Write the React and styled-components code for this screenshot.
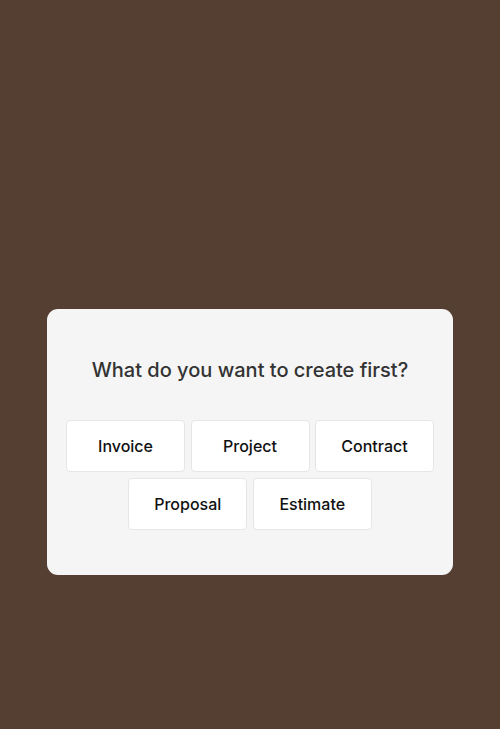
import React from "react";
import styled, { createGlobalStyle } from "styled-components";

const Global = createGlobalStyle`
  html, body { margin: 0; padding: 0; background: #553f33; }
  body { font-family: Inter, "Liberation Sans", sans-serif; }
  * { box-sizing: border-box; }
`;

const Page = styled.div`
  width: 500px;
  min-height: 729px;
  background: #553f33;
  padding-top: 309px;
  display: flex;
  justify-content: center;
  align-items: flex-start;
`;

const Card = styled.div`
  width: 406px;
  background: #f5f5f5;
  border-radius: 11px;
  padding: 47px 18px 45px;
  display: flex;
  flex-direction: column;
  align-items: center;
`;

const Title = styled.h2`
  margin: 0;
  font-size: 20px;
  line-height: 28px;
  font-weight: 500;
  color: #333333;
  text-align: center;
`;

const Options = styled.div`
  margin-top: 36px;
  display: flex;
  flex-wrap: wrap;
  justify-content: center;
  gap: 6px 5.5px;
  width: 100%;
`;

const Option = styled.button`
  width: 119px;
  height: 52px;
  background: #ffffff;
  border: 1px solid #e6e6e6;
  border-radius: 4px;
  font-family: Inter, "Liberation Sans", sans-serif;
  font-size: 16px;
  font-weight: 500;
  color: #111111;
  cursor: pointer;
  padding: 0;
`;

const items = ["Invoice", "Project", "Contract", "Proposal", "Estimate"];

export default function App() {
  return (
    <>
      <Global />
      <Page>
        <Card>
          <Title>What do you want to create first?</Title>
          <Options>
            {items.map((i) => (
              <Option key={i}>{i}</Option>
            ))}
          </Options>
        </Card>
      </Page>
    </>
  );
}
